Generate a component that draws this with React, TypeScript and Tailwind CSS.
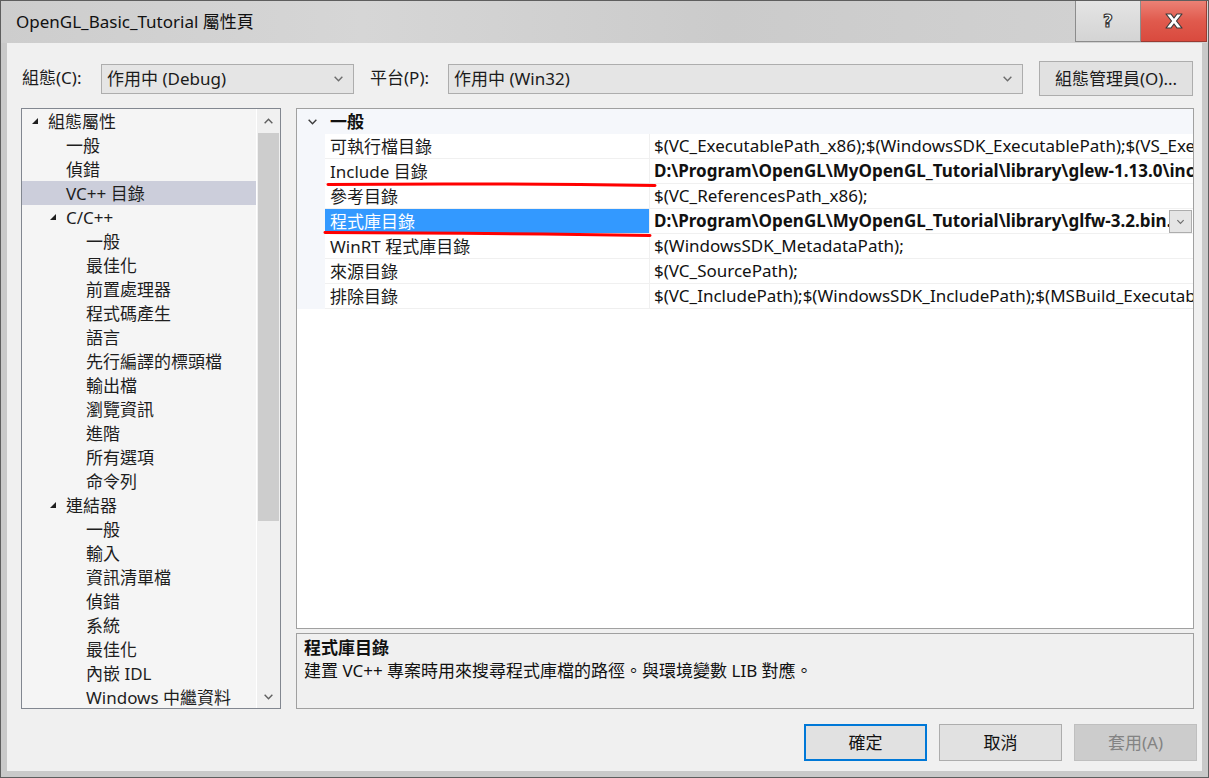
import React from "react";

const FONT = "font-['Noto_Sans','Noto_Sans_CJK_TC',sans-serif]";

type TreeItem = { label: string; level: number; expanded?: boolean; selected?: boolean };

const tree: TreeItem[] = [
  { label: "組態屬性", level: 0, expanded: true },
  { label: "一般", level: 1 },
  { label: "偵錯", level: 1 },
  { label: "VC++ 目錄", level: 1, selected: true },
  { label: "C/C++", level: 1, expanded: true },
  { label: "一般", level: 2 },
  { label: "最佳化", level: 2 },
  { label: "前置處理器", level: 2 },
  { label: "程式碼產生", level: 2 },
  { label: "語言", level: 2 },
  { label: "先行編譯的標頭檔", level: 2 },
  { label: "輸出檔", level: 2 },
  { label: "瀏覽資訊", level: 2 },
  { label: "進階", level: 2 },
  { label: "所有選項", level: 2 },
  { label: "命令列", level: 2 },
  { label: "連結器", level: 1, expanded: true },
  { label: "一般", level: 2 },
  { label: "輸入", level: 2 },
  { label: "資訊清單檔", level: 2 },
  { label: "偵錯", level: 2 },
  { label: "系統", level: 2 },
  { label: "最佳化", level: 2 },
  { label: "內嵌 IDL", level: 2 },
  { label: "Windows 中繼資料", level: 2 },
];

type Prop = { name: string; value: string; bold?: boolean; selected?: boolean };
const props: Prop[] = [
  { name: "可執行檔目錄", value: "$(VC_ExecutablePath_x86);$(WindowsSDK_ExecutablePath);$(VS_ExecutablePath);$(MSBuild_ExecutablePath)" },
  { name: "Include 目錄", value: "D:\\Program\\OpenGL\\MyOpenGL_Tutorial\\library\\glew-1.13.0\\include;D:\\Program", bold: true },
  { name: "參考目錄", value: "$(VC_ReferencesPath_x86);" },
  { name: "程式庫目錄", value: "D:\\Program\\OpenGL\\MyOpenGL_Tutorial\\library\\glfw-3.2.bin.WIN32\\lib-vc2015", bold: true, selected: true },
  { name: "WinRT 程式庫目錄", value: "$(WindowsSDK_MetadataPath);" },
  { name: "來源目錄", value: "$(VC_SourcePath);" },
  { name: "排除目錄", value: "$(VC_IncludePath);$(WindowsSDK_IncludePath);$(MSBuild_ExecutablePath);$(VC_LibraryPath_x86)" },
];

function Chevron({ dir = "down", color = "#606060", size = 10 }: { dir?: "down" | "up"; color?: string; size?: number }) {
  return (
    <svg width={size} height={size} viewBox="0 0 10 10">
      <path
        d={dir === "down" ? "M1.5 3.5 L5 7 L8.5 3.5" : "M1.5 6.5 L5 3 L8.5 6.5"}
        fill="none"
        stroke={color}
        strokeWidth="1.3"
      />
    </svg>
  );
}

function ExpandGlyph() {
  return (
    <svg width="8" height="8" viewBox="0 0 8 8">
      <polygon points="7,1 7,7 1,7" fill="#1e1e1e" />
    </svg>
  );
}

function Combo({ text, w }: { text: string; w: string }) {
  return (
    <div className={`${w} h-[30px] border border-[#adadad] bg-[#e5e5e5] flex items-center pl-[5px] pr-[9px]`}>
      <span className="flex-1 text-[17px] text-[#1b1b1b] leading-none pb-[1px]">{text}</span>
      <Chevron color="#6d6d6d" size={11} />
    </div>
  );
}

export default function App() {
  return (
    <div className={`${FONT} w-[1209px] h-[778px] bg-[#c9c9c9] border-t border-b border-l border-r border-[#5e5e5e] flex flex-col overflow-hidden relative`}>
      {/* Title bar */}
      <div className="h-[42px] flex items-start bg-[linear-gradient(90deg,#cdcdcd,#d6d6d6_30%,#cbcbcb_60%,#d3d3d3)]">
        <div className="flex-1 pl-[15px] pt-[9px] text-[17px] leading-[24px] text-[#111]">OpenGL_Basic_Tutorial 屬性頁</div>
        <div className="w-[66px] h-[41px] border border-[#8c8c8c] border-t-0 bg-[linear-gradient(#e4e4e4,#d4d4d4)] flex items-center justify-center">
          <span className="text-[17px] font-bold text-white leading-none [-webkit-text-stroke:1.2px_#3a3a3a] font-['DejaVu_Sans',sans-serif]">?</span>
        </div>
        <div className="w-[66px] h-[41px] mr-[1px] border border-[#9a3a32] border-t-0 border-l-0 bg-[linear-gradient(#ec8175,#e05a4d_50%,#d94a3e)] flex items-center justify-center">
          <svg width="22" height="18" viewBox="0 0 22 18">
            <path d="M3 2 L8 2 L11 6 L14 2 L19 2 L13.5 9 L19 16 L14 16 L11 12 L8 16 L3 16 L8.5 9 Z" fill="#ffffff" stroke="#3a3a3a" strokeWidth="1.2" strokeLinejoin="round" />
          </svg>
        </div>
      </div>

      {/* Client area */}
      <div className="flex-1 mx-[6px] mb-[6px] bg-[#f0f0f0] flex flex-col">
        {/* Toolbar */}
        <div className="h-[35px] mt-[18px] flex items-center text-[17px] text-[#1b1b1b] leading-none">
          <span className="ml-[15px] w-[79px] pb-[2px]">組態(C):</span>
          <Combo text="作用中 (Debug)" w="w-[253px]" />
          <span className="ml-[16px] w-[78px] pb-[2px]">平台(P):</span>
          <Combo text="作用中 (Win32)" w="w-[575px]" />
          <div className="ml-[16px] w-[154px] h-[35px] border border-[#adadad] bg-[#e1e1e1] flex items-center justify-center pb-[1px]">組態管理員(O)...</div>
        </div>

        {/* Main */}
        <div className="mt-[12px] flex h-[601px]">
          {/* Tree */}
          <div className="ml-[14px] w-[260px] h-[601px] border border-[#828790] bg-[#f5f5f5] flex">
            <div className="flex-1 overflow-hidden border-r border-white">
              {tree.map((t, i) => (
                <div
                  key={i}
                  className={`h-[24px] flex items-center text-[17px] leading-none text-[#1e1e1e] whitespace-nowrap ${t.selected ? "bg-[#cccedb]" : ""} ${
                    t.level === 0 ? "pl-[9px]" : t.level === 1 ? (t.expanded ? "pl-[27px]" : "pl-[42px]") : "pl-[62px]"
                  }`}
                >
                  {t.expanded && (
                    <span className="w-[15px] flex items-center pb-[1px]">
                      <ExpandGlyph />
                    </span>
                  )}
                  <span className="ml-[2px]">{t.label}</span>
                </div>
              ))}
            </div>
            <div className="w-[23px] bg-[#f0f0f0] flex flex-col items-center">
              <div className="h-[24px] flex items-center justify-center">
                <Chevron dir="up" color="#606060" size={11} />
              </div>
              <div className="w-[21px] h-[388px] bg-[#cdcdcd]" />
              <div className="flex-1" />
              <div className="h-[24px] flex items-center justify-center">
                <Chevron dir="down" color="#606060" size={11} />
              </div>
            </div>
          </div>

          {/* Right column */}
          <div className="ml-[15px] w-[898px] flex flex-col">
            <div className="relative h-[521px] border border-[#a0a0a0] bg-white overflow-hidden">
              <div className="bg-[#f5f7fb]">
                <div className="h-[25px] flex items-center">
                  <span className="w-[28px] flex justify-center pl-[2px]">
                    <Chevron color="#3c3c3c" size={11} />
                  </span>
                  <span className="ml-[5px] text-[17px] font-bold text-[#111] leading-none">一般</span>
                </div>
                {props.map((p, i) => (
                  <div key={i} className="h-[25px] flex pl-[28px]">
                    <div className="flex-1 min-w-0 flex border-b border-[#f0f0f0] bg-white">
                      <div
                        className={`w-[325px] shrink-0 border-r border-[#f0f0f0] flex items-center pl-[5px] text-[17px] leading-none whitespace-nowrap ${
                          p.selected ? "bg-[#3399ff] text-white" : "text-[#1b1b1b]"
                        }`}
                      >
                        {p.name}
                      </div>
                      <div className="flex-1 min-w-0 flex items-center pl-[4px] overflow-hidden">
                        <span className={`flex-1 min-w-0 overflow-hidden whitespace-nowrap text-[17px] leading-[22px] text-[#111] ${p.bold ? "font-bold" : ""}`}>
                          {p.value}
                        </span>
                        {p.selected && (
                          <div className="w-[23px] h-[23px] mr-[1px] border border-[#adadad] bg-[#e5e5e5] flex items-center justify-center shrink-0">
                            <Chevron color="#6d6d6d" size={9} />
                          </div>
                        )}
                      </div>
                    </div>
                  </div>
                ))}
              </div>
              {/* red annotation underlines */}
              <svg className="absolute left-0 top-0 pointer-events-none" width="898" height="160" viewBox="0 0 898 160">
                <path d="M31 75.5 Q180 74 358 76.5" fill="none" stroke="#ff0000" strokeWidth="3" strokeLinecap="round" />
                <path d="M28 123.5 Q180 124 353 126.5" fill="none" stroke="#ff0000" strokeWidth="3" strokeLinecap="round" />
              </svg>
            </div>
            <div className="mt-[4px] h-[76px] border border-[#a0a0a0] bg-[#f0f0f0] px-[7px] pt-[3px] text-[17px] text-[#111]">
              <div className="font-bold leading-[22px]">程式庫目錄</div>
              <div className="leading-[24px]">建置 VC++ 專案時用來搜尋程式庫檔的路徑。與環境變數 LIB 對應。</div>
            </div>
          </div>
        </div>

        {/* Buttons */}
        <div className="mt-[15px] flex justify-end pr-[5px] gap-[12px] text-[17px]">
          <div className="w-[123px] h-[37px] border-2 border-[#0078d7] bg-[#e1e1e1] flex items-center justify-center text-[#111]">確定</div>
          <div className="w-[123px] h-[37px] border border-[#adadad] bg-[#e1e1e1] flex items-center justify-center text-[#111]">取消</div>
          <div className="w-[123px] h-[37px] border border-[#bfbfbf] bg-[#cccccc] flex items-center justify-center text-[#838383]">套用(A)</div>
        </div>
      </div>
    </div>
  );
}
